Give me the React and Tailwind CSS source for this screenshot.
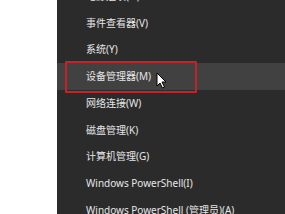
import React from 'react';

const items = [
  '电源选项(O)',
  '事件查看器(V)',
  '系统(Y)',
  '设备管理器(M)',
  '网络连接(W)',
  '磁盘管理(K)',
  '计算机管理(G)',
  'Windows PowerShell(I)',
  'Windows PowerShell (管理员)(A)',
];

function Cursor() {
  return (
    <svg width="11" height="17" viewBox="0 0 11 17" className="absolute left-[99px] top-[72px]">
      <path d="M1 1 L1 14 L4 11 L6.5 16 L8.5 15 L6 10 L10 10 Z" fill="#ffffff" stroke="#000000" strokeWidth="1" strokeLinejoin="round" />
    </svg>
  );
}

export default function App() {
  return (
    <div className="w-[285px] h-[214px] flex bg-white overflow-hidden" style={{ fontFamily: '"Noto Sans", "Noto Sans CJK SC", sans-serif' }}>
      <div className="w-[57px] shrink-0 bg-white" />
      <div className="flex-1 relative bg-[#2b2b2b] overflow-hidden">
        <div className="flex flex-col -mt-[17px]">
          {items.map((t, i) => (
            <div
              key={t}
              className={`h-[26.75px] flex items-center pl-[29px] text-[10px] text-[#e6e6e6] whitespace-nowrap ${i === 3 ? 'bg-[#414141]' : ''}`}
            >
              {t}
            </div>
          ))}
        </div>
        {/* red annotation box */}
        <div className="absolute left-[8px] top-[61px] w-[132px] h-[32px] border-2 border-[#c4232a] rounded-[1px]" />
        <Cursor />
      </div>
    </div>
  );
}
